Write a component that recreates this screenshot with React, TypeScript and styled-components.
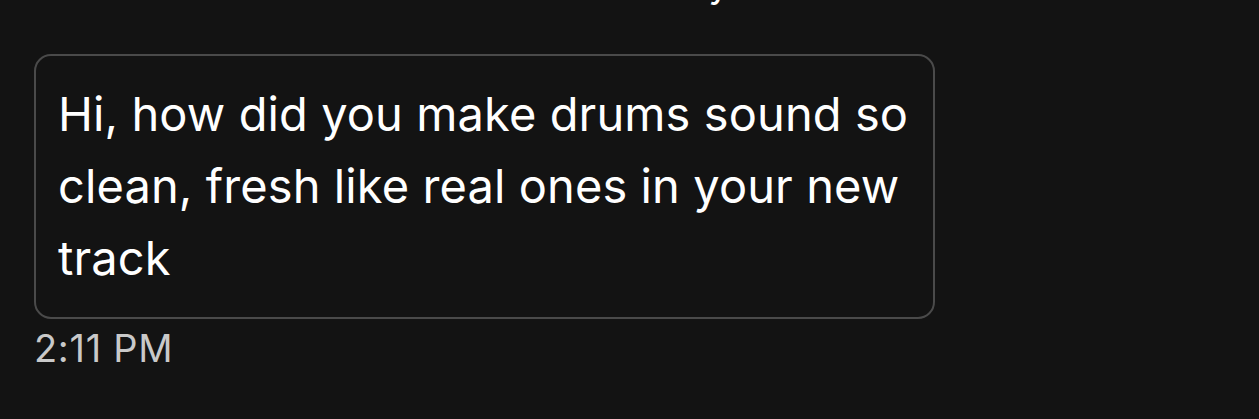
import React from "react";
import styled, { createGlobalStyle } from "styled-components";

const GlobalStyle = createGlobalStyle`
  html, body {
    margin: 0;
    padding: 0;
    background: #131313;
  }
  body {
    font-family: Inter, "Noto Sans", sans-serif;
    color: #ffffff;
  }
`;

const Screen = styled.div`
  width: 1259px;
  height: 419px;
  overflow: hidden;
  background: #131313;
  display: flex;
  flex-direction: column;
`;

const DayLabel = styled.div`
  margin-top: -40px;
  height: 46px;
  text-align: center;
  font-size: 38px;
  line-height: 46px;
  padding-left: 22px;
  color: #ffffff;
`;

const Thread = styled.div`
  display: flex;
  flex-direction: column;
  align-items: flex-start;
  padding: 48px 0 0 34px;
`;

const Bubble = styled.div`
  box-sizing: border-box;
  width: 901px;
  padding: 22px 24px 23px 22px;
  border: 2px solid #4a4a4a;
  border-radius: 17px;
  font-size: 47px;
  line-height: 72px;
  letter-spacing: 0.1px;
  color: #ffffff;
`;

const Time = styled.div`
  margin-top: 6px;
  font-size: 38px;
  line-height: 46px;
  letter-spacing: 0.7px;
  color: #c9c9c9;
`;

export default function App() {
  return (
    <>
      <GlobalStyle />
      <Screen>
        <DayLabel>Yesterday</DayLabel>
        <Thread>
          <Bubble>
            Hi, how did you make drums sound so clean, fresh like real ones in
            your new track
          </Bubble>
          <Time>2:11 PM</Time>
        </Thread>
      </Screen>
    </>
  );
}
